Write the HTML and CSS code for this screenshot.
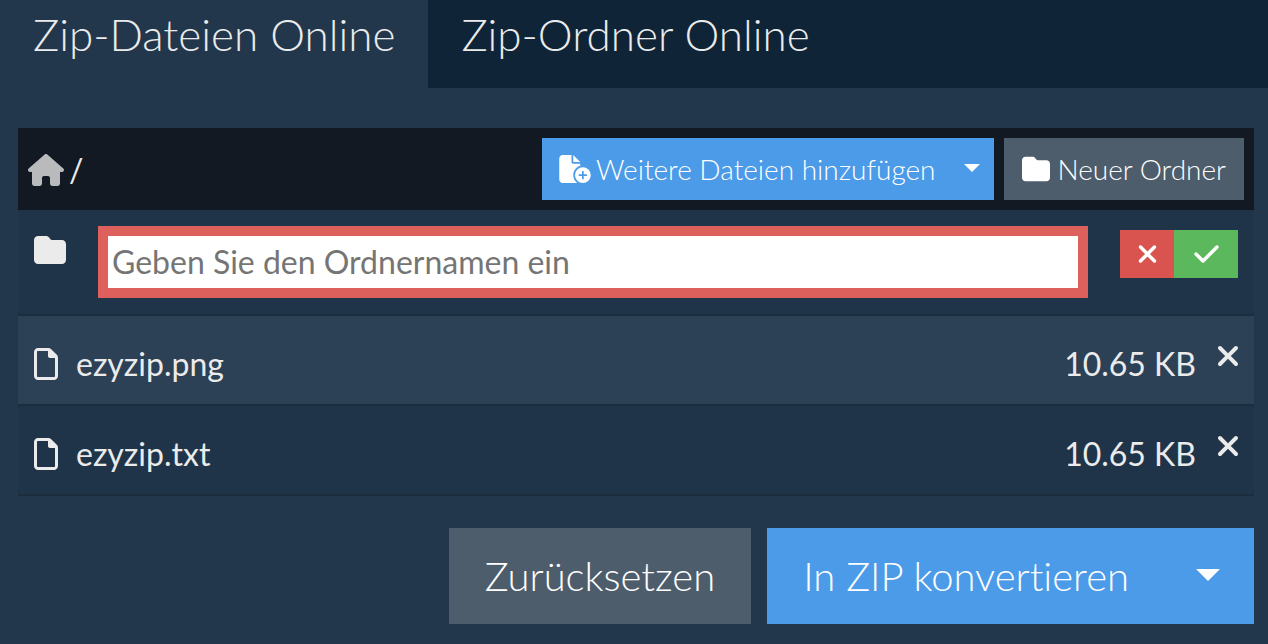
FILE: index.html
```
<!DOCTYPE html>
<html lang="de">
<head>
  <meta charset="UTF-8" />
  <meta name="viewport" content="width=device-width, initial-scale=1.0"/>
  <title>Zip-Dateien Online</title>
  <link rel="stylesheet" href="styles.css">
</head>
<body>

  <!-- icons used more than once -->
  <svg class="sprite" aria-hidden="true">
    <symbol id="icon-folder" viewBox="0 0 512 512">
      <path d="M64 480H448c35.3 0 64-28.7 64-64V160c0-35.3-28.7-64-64-64H288c-10.1 0-19.6-4.7-25.6-12.8L243.2 57.6C231.1 41.5 212.1 32 192 32H64C28.7 32 0 60.7 0 96V416c0 35.3 28.7 64 64 64z"/>
    </symbol>
    <symbol id="icon-file" viewBox="0 0 384 512">
      <path d="M320 464c8.8 0 16-7.2 16-16V160H256c-17.7 0-32-14.3-32-32V48H64c-8.8 0-16 7.2-16 16V448c0 8.8 7.2 16 16 16H320zM0 64C0 28.7 28.7 0 64 0H229.5c17 0 33.3 6.7 45.3 18.7l90.5 90.5c12 12 18.7 28.3 18.7 45.3V448c0 35.3-28.7 64-64 64H64c-35.3 0-64-28.7-64-64V64z"/>
    </symbol>
    <symbol id="icon-cross" viewBox="0 0 384 512">
      <path d="M342.6 150.6c12.5-12.5 12.5-32.8 0-45.3s-32.8-12.5-45.3 0L192 210.7 86.6 105.4c-12.5-12.5-32.8-12.5-45.3 0s-12.5 32.8 0 45.3L146.7 256 41.4 361.4c-12.5 12.5-12.5 32.8 0 45.3s32.8 12.5 45.3 0L192 301.3 297.4 406.6c12.5 12.5 32.8 12.5 45.3 0s12.5-32.8 0-45.3L237.3 256 342.6 150.6z"/>
    </symbol>
  </svg>

  <nav class="tabs">
    <a href="#dateien" class="tab active">Zip-Dateien Online</a>
    <a href="#ordner" class="tab">Zip-Ordner Online</a>
  </nav>

  <main class="container">
    <div class="toolbar">
      <div class="path">
        <a href="#" class="home" aria-label="Startordner">
          <svg class="icon-home" viewBox="0 0 576 512"><path d="M575.8 255.5c0 18-15 32.1-32 32.1h-32l.7 160.2c0 2.7-.2 5.4-.5 8.1V472c0 22.1-17.9 40-40 40H456c-1.1 0-2.2 0-3.3-.1c-1.4 .1-2.8 .1-4.2 .1H416 392c-22.1 0-40-17.9-40-40V448 384c0-17.7-14.3-32-32-32H256c-17.7 0-32 14.3-32 32v64 24c0 22.1-17.9 40-40 40H160 128.1c-1.5 0-3-.1-4.5-.2c-1.2 .1-2.4 .2-3.6 .2H104c-22.1 0-40-17.9-40-40V360c0-.9 0-1.9 .1-2.8V287.6H32c-18 0-32-14-32-32.1c0-9 3-17 10-24L266.4 8c7-7 15-8 22-8s15 2 21 7L564.8 231.5c8 7 12 15 11 24z"/></svg>
        </a>
        <span>/</span>
      </div>
      <div class="btn-group">
        <button type="button" class="btn btn-blue btn-add">
          <svg class="icon-add" viewBox="0 0 576 512"><path fill-rule="evenodd" d="M0 64C0 28.7 28.7 0 64 0H224V128c0 17.7 14.3 32 32 32H384v38.6C310.1 219.5 256 287.4 256 368c0 59.1 29.1 111.3 73.7 143.3c-3.2 .5-6.4 .7-9.7 .7H64c-35.3 0-64-28.7-64-64V64zm384 64H256V0L384 128zM288 368a144 144 0 1 1 288 0 144 144 0 1 1 -288 0zm160-64c0-8.8-7.2-16-16-16s-16 7.2-16 16v48H368c-8.8 0-16 7.2-16 16s7.2 16 16 16h48v48c0 8.8 7.2 16 16 16s16-7.2 16-16V384h48c8.8 0 16-7.2 16-16s-7.2-16-16-16H448V304z"/></svg>
          Weitere Dateien hinzufügen
        </button>
        <button type="button" class="btn btn-blue btn-toggle" aria-label="Weitere Quellen"><span class="caret"></span></button>
      </div>
      <button type="button" class="btn btn-grey">
        <svg class="icon-md"><use href="#icon-folder"/></svg>
        Neuer Ordner
      </button>
    </div>

    <form class="new-folder">
      <svg class="icon-folder"><use href="#icon-folder"/></svg>
      <input type="text" id="folderName" aria-label="Ordnername" placeholder="Geben Sie den Ordnernamen ein" />
      <div class="btn-group">
        <button type="button" class="cancel" aria-label="Abbrechen"><svg class="icon-x"><use href="#icon-cross"/></svg></button>
        <button type="submit" class="confirm" aria-label="Ordner anlegen">
          <svg class="icon-check" viewBox="0 0 448 512"><path d="M438.6 105.4c12.5 12.5 12.5 32.8 0 45.3l-256 256c-12.5 12.5-32.8 12.5-45.3 0l-128-128c-12.5-12.5-12.5-32.8 0-45.3s32.8-12.5 45.3 0L160 338.7 393.4 105.4c12.5-12.5 32.8-12.5 45.3 0z"/></svg>
        </button>
      </div>
    </form>

    <table class="files">
      <tbody>
        <tr>
          <td class="type"><svg class="icon-file"><use href="#icon-file"/></svg></td>
          <td class="name">ezyzip.png</td>
          <td class="size">10.65 KB</td>
          <td class="delete"><button type="button" aria-label="ezyzip.png entfernen"><svg class="icon-file"><use href="#icon-cross"/></svg></button></td>
        </tr>
        <tr>
          <td class="type"><svg class="icon-file"><use href="#icon-file"/></svg></td>
          <td class="name">ezyzip.txt</td>
          <td class="size">10.65 KB</td>
          <td class="delete"><button type="button" aria-label="ezyzip.txt entfernen"><svg class="icon-file"><use href="#icon-cross"/></svg></button></td>
        </tr>
      </tbody>
    </table>

    <div class="actions">
      <button type="button" class="btn btn-large btn-grey">Zurücksetzen</button>
      <div class="btn-group">
        <button type="button" class="btn btn-large btn-blue">In ZIP konvertieren</button>
        <button type="button" class="btn btn-large btn-blue btn-toggle" aria-label="Weitere Formate"><span class="caret"></span></button>
      </div>
    </div>
  </main>

</body>
</html>
```
FILE: styles.css
```
* {
  box-sizing: border-box;
}

body {
  font-family: Lato, sans-serif;
  font-size: 32px;
  font-variant-ligatures: none;
  margin: 0;
  background-color: #22374b;
  color: #ebebeb;
}

button,
input {
  font-family: inherit;
  font-variant-ligatures: none;
  border: none;
  border-radius: 0;
}

button {
  color: white;
  cursor: pointer;
}

svg {
  display: block;
  flex: none;
  fill: currentColor;
}

.sprite {
  position: absolute;
  width: 0;
  height: 0;
}

.tabs {
  display: flex;
  background-color: #0f2437;
}

.tab {
  padding: 6px 33px 26px;
  font-size: 44px;
  font-weight: 300;
  line-height: 56px;
  color: #ebebeb;
  text-decoration: none;
}

.tab.active {
  background-color: #22374b;
}

.container {
  padding: 40px 14px 20px 18px;
}

.toolbar {
  display: flex;
  align-items: center;
  gap: 10px;
  padding: 10px;
  background-color: #121922;
}

.path {
  display: flex;
  align-items: center;
  gap: 5px;
  margin-right: auto;
}

.home {
  padding-top: 2px;
  color: #b9babc;
}

.btn-group {
  display: flex;
}

.btn {
  display: flex;
  align-items: center;
  gap: 8px;
  height: 62px;
  padding: 0 18px;
  font-size: 28px;
  font-weight: 300;
  white-space: nowrap;
}

.btn-blue {
  background-color: #4c9be8;
}

.btn-grey {
  background-color: #4e5d6c;
}

.btn-add {
  gap: 5px;
  padding: 0 14px 0 17px;
}

.btn-toggle {
  padding: 0 14px;
}

.caret {
  border-top: 8px solid;
  border-left: 8px solid transparent;
  border-right: 8px solid transparent;
  margin-bottom: 2px;
}

.btn-large {
  height: 96px;
  padding: 0 36px;
  font-size: 40px;
}

.btn-large.btn-toggle {
  padding: 0 34px 0 31px;
}

.btn-large .caret {
  border-width: 12px 12px 0;
}

.new-folder {
  display: flex;
  align-items: flex-start;
  padding: 16px;
  background-color: #1f3448;
  border-bottom: 2px solid #1c2d3e;
}

.new-folder input {
  flex: 1;
  min-width: 0;
  height: 72px;
  margin: 0 32px;
  padding: 0 4px 2px;
  border: 10px solid #dd605d;
  background-color: white;
  color: #333;
  font-size: 32px;
}

.new-folder input::placeholder {
  color: #757575;
}

.icon-folder {
  width: 32px;
  height: 32px;
  margin-top: 8px;
}

.new-folder .btn-group {
  margin-top: 4px;
}

.cancel,
.confirm {
  display: flex;
  align-items: center;
  justify-content: center;
  height: 48px;
  padding: 0;
}

.cancel {
  width: 54px;
  background-color: #d9534f;
}

.confirm {
  width: 64px;
  background-color: #5cb85c;
}

.files {
  width: 100%;
  border-collapse: separate;
  border-spacing: 0;
}

.files tr {
  background-color: #1f3448;
}

.files tr:nth-child(odd) {
  background-color: #2c4056;
}

.files td {
  height: 90px;
  padding: 8px 0 0;
  border-bottom: 2px solid #1c2d3e;
}

.files .type {
  width: 58px;
  padding-left: 16px;
}

.files .name,
.files .size {
  padding-top: 6px;
}

.files .size {
  text-align: right;
}

.files .delete {
  width: 58px;
  padding: 24px 14px 0 20px;
  vertical-align: top;
}

.delete button {
  display: block;
  padding: 0;
  background: none;
  color: #ebebeb;
}

.icon-home {
  width: 36px;
  height: 32px;
}

.icon-add {
  width: 32px;
  height: 28px;
}

.icon-md {
  width: 28px;
  height: 28px;
}

.icon-x {
  width: 21px;
  height: 28px;
}

.icon-check {
  width: 25px;
  height: 28px;
}

.icon-file {
  width: 24px;
  height: 32px;
}

.actions {
  display: flex;
  flex-wrap: wrap;
  justify-content: flex-end;
  gap: 16px;
  margin-top: 32px;
}
```
